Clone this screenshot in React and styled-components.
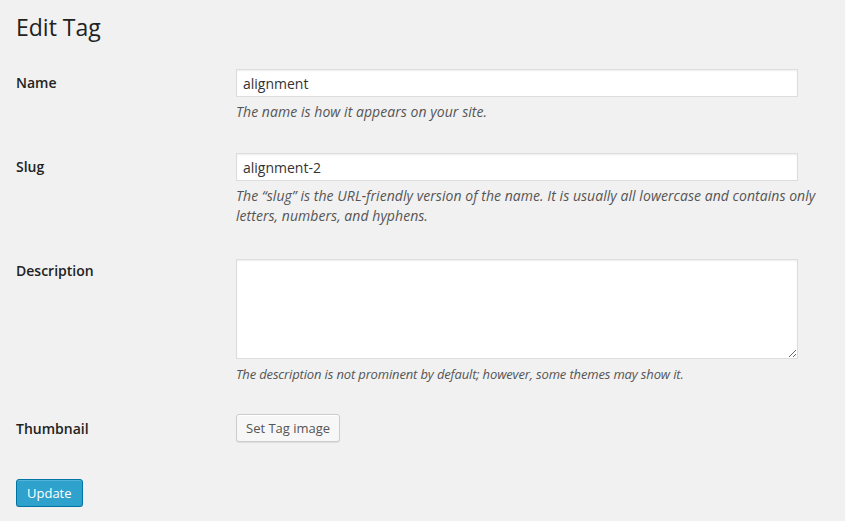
import React from 'react';
import styled, { createGlobalStyle } from 'styled-components';

const GlobalStyle = createGlobalStyle`
  html, body {
    margin: 0;
    padding: 0;
    background: #f1f1f1;
  }
  body {
    font-family: "Open Sans", "Liberation Sans", sans-serif;
    color: #444;
    font-size: 13px;
  }
`;

const Wrap = styled.div`
  padding: 0 7px 0 16px;
`;

const Title = styled.h1`
  margin: 0;
  padding: 13px 0 0;
  font-size: 23px;
  font-weight: 400;
  line-height: 29px;
  color: #222;
`;

const Form = styled.form`
  margin-top: 12px;
`;

const Row = styled.div`
  display: flex;
  align-items: flex-start;
`;

const Label = styled.label`
  flex: 0 0 200px;
  padding: 20px 10px 20px 0;
  font-size: 14px;
  font-weight: 600;
  line-height: 1.3;
  color: #222;
`;

const Field = styled.div`
  flex: 1;
  min-width: 0;
  padding: ${(p) => p.$top || 15}px 10px ${(p) => p.$bottom || 16}px;
`;

const TextInput = styled.input`
  box-sizing: border-box;
  display: block;
  width: 95%;
  height: 28px;
  margin: 0;
  padding: 3px 6px;
  border: 1px solid #ddd;
  background: #fff;
  box-shadow: inset 0 1px 2px rgba(0, 0, 0, 0.07);
  font-family: "Open Sans", "Liberation Sans", sans-serif;
  font-size: 14px;
  color: #333;
  outline: none;
`;

const TextArea = styled.textarea`
  box-sizing: border-box;
  display: block;
  width: 95%;
  height: 100px;
  margin: 0;
  padding: 3px 6px;
  border: 1px solid #ddd;
  background: #fff;
  box-shadow: inset 0 1px 2px rgba(0, 0, 0, 0.07);
  font-family: "Open Sans", "Liberation Sans", sans-serif;
  font-size: 14px;
  outline: none;
`;

const Note = styled.p`
  margin: 5px 0 0;
  font-size: ${(p) => (p.$small ? 13 : 14)}px;
  letter-spacing: ${(p) => (p.$small ? '-0.15px' : '0.05px')};
  font-style: italic;
  line-height: 20px;
  color: #555;
`;

const SecondaryButton = styled.button`
  box-sizing: border-box;
  height: 28px;
  margin: 0;
  padding: 0 9px 1px;
  border: 1px solid #ccc;
  border-radius: 3px;
  background: #f7f7f7;
  box-shadow: inset 0 1px 0 #fff, 0 1px 0 rgba(0, 0, 0, 0.08);
  font-family: "Open Sans", "Liberation Sans", sans-serif;
  font-size: 13px;
  line-height: 26px;
  color: #555;
  cursor: pointer;
`;

const PrimaryButton = styled(SecondaryButton)`
  margin-top: 21px;
  padding: 0 10px 1px;
  background: #2ea2cc;
  border-color: #0074a2;
  box-shadow: inset 0 1px 0 rgba(120, 200, 230, 0.5), 0 1px 0 rgba(0, 0, 0, 0.15);
  color: #fff;
`;

export default function App() {
  return (
    <Wrap>
      <GlobalStyle />
      <Title>Edit Tag</Title>
      <Form onSubmit={(e) => e.preventDefault()}>
        <Row>
          <Label htmlFor="tag-name">Name</Label>
          <Field>
            <TextInput id="tag-name" defaultValue="alignment" />
            <Note>The name is how it appears on your site.</Note>
          </Field>
        </Row>
        <Row>
          <Label htmlFor="tag-slug">Slug</Label>
          <Field>
            <TextInput id="tag-slug" defaultValue="alignment-2" />
            <Note>
              The “slug” is the URL-friendly version of the name. It is usually all lowercase and contains only letters, numbers, and hyphens.
            </Note>
          </Field>
        </Row>
        <Row>
          <Label htmlFor="tag-description">Description</Label>
          <Field $top={17}>
            <TextArea id="tag-description" />
            <Note $small>The description is not prominent by default; however, some themes may show it.</Note>
          </Field>
        </Row>
        <Row>
          <Label>Thumbnail</Label>
          <Field $top={14} $bottom={15}>
            <SecondaryButton type="button">Set Tag image</SecondaryButton>
          </Field>
        </Row>
        <PrimaryButton type="submit">Update</PrimaryButton>
      </Form>
    </Wrap>
  );
}
